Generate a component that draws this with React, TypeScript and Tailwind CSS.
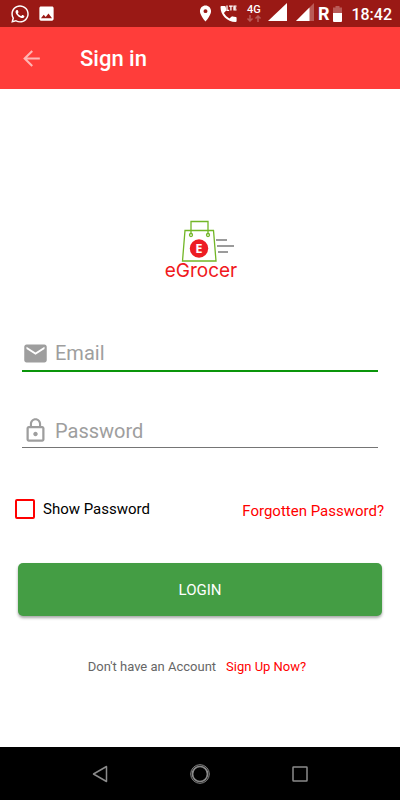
import { useState } from "react";
import { MdArrowBack, MdEmail, MdImage, MdLocationOn, MdLockOutline } from "react-icons/md";
import { FaWhatsapp } from "react-icons/fa";

function StatusBar() {
  return (
    <div className="flex h-[27px] shrink-0 items-center justify-between bg-[#9a1915] pr-2 pl-[10px] text-white">
      <div className="flex items-center gap-[7px]">
        <FaWhatsapp size={20} />
        <MdImage size={19} />
      </div>
      <div className="flex items-center">
        <MdLocationOn size={19} className="mr-[5px]" />
        <svg width="18" height="18" viewBox="0 0 18 18" fill="currentColor" className="mr-2" aria-label="LTE call">
          <path d="M1.500 1h3.200q.8 0 1 .8l.5 3q.1.700-.4 1.200L3.900 8q1.800 3.500 5.500 5.600l2-1.900q.5-.5 1.200-.3l3.200.6q.8.200.8 1v3q0 1-1 1C7 17 .5 10 .5 2q0-1 1-1z" />
          <g fill="none" stroke="currentColor" strokeWidth="1.300">
            <path d="M7 .5v4.800h2.200M9 1.200h3.800M10.900 1.200v4.300M16.500 1.200H14v3.600h2.500M14 3h2.200" />
          </g>
        </svg>
        <div className="mr-[6px] flex w-4 flex-col items-center">
          <span className="text-[11px] leading-[10px] font-medium">4G</span>
          <svg width="16" height="7" viewBox="0 0 16 7" fill="none" stroke="#b95a57" strokeWidth="1.500" aria-hidden="true">
            <path d="M4 0v6M1.500 3.500 4 6l2.500-2.500M12 7V1M9.500 3.500 12 1l2.500 2.500" />
          </svg>
        </div>
        <div className="mr-1 mb-1 flex gap-[9px]">
          <svg width="19" height="18" viewBox="0 0 19 18" fill="currentColor" aria-hidden="true">
            <path d="M19 0v18H0z" />
          </svg>
          <svg width="18" height="18" viewBox="0 0 18 18" aria-hidden="true">
            <path d="M18 0v18H0z" fill="#b95a57" />
            <path d="M13.500 4.500V18H0z" fill="#fff" />
          </svg>
        </div>
        <span className="mr-1 text-lg leading-5 font-bold">R</span>
        <svg width="9" height="16" viewBox="0 0 9 16" className="mr-[9px]" aria-hidden="true">
          <path d="M2.500 0h4v1.500H9V7H0V1.500h2.500z" fill="#b95a57" />
          <path d="M0 7h9v8a1 1 0 0 1-1 1H1a1 1 0 0 1-1-1z" fill="#fff" />
        </svg>
        <span className="pt-[2px] text-base leading-5 font-medium">18:42</span>
      </div>
    </div>
  );
}

function Logo() {
  return (
    <div className="flex flex-col items-center">
      <svg width="74" height="42" viewBox="0 0 74 42" fill="none" aria-hidden="true">
        <g stroke="#72b626" strokeWidth="1.300">
          <path d="M22 10.500H50.500L53 41H19.500z" />
          <path d="M28 14V1.500H45V14" />
          <circle cx="28" cy="15" r="1.500" fill="#fff" />
          <circle cx="45" cy="15" r="1.500" fill="#fff" />
        </g>
        <circle cx="36" cy="28.500" r="9.200" fill="#ed1c24" />
        <text x="36" y="33" textAnchor="middle" fill="#fff" className="font-['Open_Sans',sans-serif] text-[13px] font-bold">E</text>
        <path d="M53 20h11M54 26h17M55 32h10" stroke="#7b7b7b" strokeWidth="1.300" />
      </svg>
      <div className="pl-[2px] font-[Inter,sans-serif] text-[19px] leading-[18px] text-[#f01820]">eGrocer</div>
    </div>
  );
}

export default function App() {
  const [show, setShow] = useState(false);
  return (
    <div className="flex min-h-screen flex-col bg-white font-[Roboto,sans-serif]">
      <StatusBar />
      <header className="flex h-[62px] shrink-0 items-center gap-9 bg-[#ff3d3a] pl-[19px] text-white">
        <button type="button" aria-label="Back" className="text-[#ffb5b3]">
          <MdArrowBack size={25} />
        </button>
        <h1 className="pt-[2px] text-[22px] leading-7 font-medium">Sign in</h1>
      </header>

      <main className="flex-1 pt-[131px]">
        <Logo />
        <form onSubmit={(e) => e.preventDefault()}>
          <div className="mx-[22px] mt-14 flex h-9 items-center gap-[6px] border-b-2 border-[#0a950a] text-[#9e9e9e]">
            <label htmlFor="email" aria-label="Email">
              <MdEmail size={27} />
            </label>
            <input id="email" type="email" placeholder="Email" className="min-w-0 flex-1 text-xl leading-7 text-black outline-none placeholder:text-[#9e9e9e]" />
          </div>
          <div className="mx-[22px] mt-[42px] flex h-[34px] items-center gap-[6px] border-b border-[#757575] text-[#9e9e9e]">
            <label htmlFor="password" aria-label="Password">
              <MdLockOutline size={27} />
            </label>
            <input id="password" type={show ? "text" : "password"} placeholder="Password" className="min-w-0 flex-1 text-xl leading-7 text-black outline-none placeholder:text-[#9e9e9e]" />
          </div>
          <div className="mt-[49px] flex items-start justify-between pr-4 pl-[15px] text-[15px] leading-6">
            <label className="flex items-center gap-2 text-black">
              <input
                type="checkbox"
                checked={show}
                onChange={(e) => setShow(e.target.checked)}
                className="size-5 appearance-none rounded-[2px] border-2 border-[#ff0000] checked:bg-[#ff0000]"
              />
              Show Password
            </label>
            <a href="#forgotten" className="pt-[2px] text-[#ff0000]">Forgotten Password?</a>
          </div>
          <div className="mx-[18px] mt-10">
            <button type="submit" className="h-[53px] w-full rounded-[5px] bg-[#449d44] pt-[2px] text-[15px] text-white shadow-[0_2px_3px_rgba(0,0,0,0.35)]">
              LOGIN
            </button>
          </div>
        </form>
        <p className="mt-[41px] flex justify-center gap-[10px] pr-[6px] text-[13px] leading-5 text-[#666]">
          Don't have an Account
          <a href="#signup" className="text-[#ff0000]">Sign Up Now?</a>
        </p>
      </main>

      <nav className="flex h-[53px] shrink-0 items-center justify-center gap-20 bg-black text-[#8a8a8a]">
        <button type="button" aria-label="Back">
          <svg width="20" height="20" viewBox="0 0 20 20" fill="none" stroke="currentColor" strokeWidth="1.500">
            <path d="M16.500 2.500v15L3.500 10z" strokeLinejoin="round" />
          </svg>
        </button>
        <button type="button" aria-label="Home">
          <svg width="20" height="20" viewBox="0 0 20 20" fill="none" stroke="currentColor">
            <circle cx="10" cy="10" r="9.300" strokeWidth="1" />
            <circle cx="10" cy="10" r="7.500" strokeWidth="1.700" />
          </svg>
        </button>
        <button type="button" aria-label="Overview">
          <svg width="20" height="20" viewBox="0 0 20 20" fill="none" stroke="currentColor" strokeWidth="1.500">
            <rect x="3" y="3" width="14" height="14" rx="0.500" />
          </svg>
        </button>
      </nav>
    </div>
  );
}
